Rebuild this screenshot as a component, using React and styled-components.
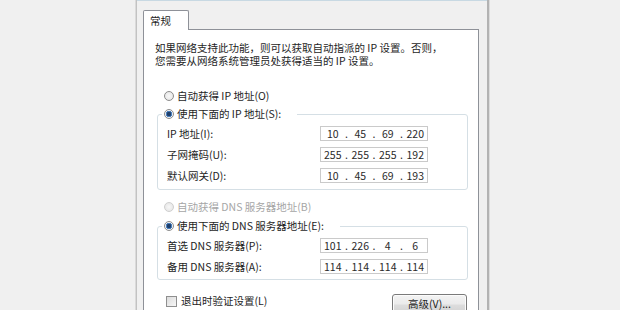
import React from 'react';
import styled, { createGlobalStyle } from 'styled-components';

const GlobalStyle = createGlobalStyle`
  html, body {
    margin: 0;
    padding: 0;
    background: #f0f0f0;
    overflow: hidden;
  }
  body {
    font-family: "Noto Sans CJK SC", "Liberation Sans", sans-serif;
    font-size: 10.5px;
    color: #1e1e1e;
  }
`;

const Screen = styled.div`
  display: flex;
  width: 620px;
  height: 310px;
  overflow: hidden;
`;

const Gutter = styled.div`
  width: 136px;
  flex-shrink: 0;
`;

const Window = styled.div`
  width: 353px;
  flex-shrink: 0;
  box-sizing: border-box;
  border-left: 1px solid #c2c2c2;
  border-right: 2px solid #b3b3b3;
  box-shadow: -1px 0 0 #dadada, 1px 0 0 #dcdcdc;
  display: flex;
  flex-direction: column;
  background: #f0f0f0;
`;

const TitleEdge = styled.div`
  height: 3px;
  background: linear-gradient(#e6f4fb, #d6eaf4);
  border-bottom: 1px solid #c8d9e3;
`;

const Body = styled.div`
  flex: 1;
  display: flex;
  flex-direction: column;
  padding: 9px 8px 0 6px;
`;

const Tabs = styled.div`
  display: flex;
  position: relative;
  z-index: 1;
  margin-bottom: -1px;
`;

const Tab = styled.div`
  width: 46px;
  height: 20px;
  box-sizing: border-box;
  border: 1px solid #8e9198;
  border-bottom: none;
  border-radius: 2px 2px 0 0;
  background: #fff;
  padding: 3px 0 0 6px;
  line-height: 14px;
`;

const Panel = styled.div`
  flex: 1;
  display: flex;
  flex-direction: column;
  background: #fff;
  border: 1px solid #8e9198;
  border-bottom: none;
  padding-top: 11px;
`;

const Desc = styled.p`
  margin: 0 0 0 11px;
  line-height: 13px;
  white-space: nowrap;
`;

const DescLine = styled.span`
  display: block;
  height: 13px;
`;

const Option = styled.label`
  display: inline-flex;
  align-items: center;
  gap: 3px;
  height: 14px;
  line-height: 14px;
  white-space: nowrap;
  color: ${p => (p.$disabled ? '#a6a6a6' : '#1e1e1e')};
  margin: ${p => p.$margin || '0'};
`;

const RadioDot = styled.span`
  width: 10px;
  height: 10px;
  box-sizing: border-box;
  border-radius: 50%;
  border: 1px solid ${p => (p.$disabled ? '#cfcfcf' : '#8c8c8c')};
  background: ${p =>
    p.$checked
      ? 'radial-gradient(circle, #1f3f6a 0 2px, #4a7fbd 2.4px 3px, #f4f4f4 3.3px)'
      : 'radial-gradient(circle, #f8f8f8, #e2e2e2)'};
`;

const Group = styled.fieldset`
  margin: ${p => p.$top} 10px 0 13px;
  padding: 4px 39px ${p => p.$bottom} 9px;
  border: 1px solid #d5dfe5;
  border-radius: 3px;
  min-width: 0;
`;

const Legend = styled.legend`
  padding: 0 16px 0 2px;
  margin-left: -5px;
  line-height: 14px;
`;

const Fields = styled.div`
  display: grid;
  grid-template-columns: 153px 108px;
  grid-auto-rows: 15px;
  row-gap: 6px;
  align-items: center;
`;

const FieldLabel = styled.span`
  line-height: 14px;
  white-space: nowrap;
`;

const IpBox = styled.div`
  display: flex;
  width: 108px;
  height: 15px;
  box-sizing: border-box;
  border: 1px solid #cacaca;
  background: #fff;
  color: #2a2a2a;
  line-height: 13px;
`;

const Octet = styled.span`
  flex: 1;
  text-align: center;
`;

const Dot = styled.span`
  width: 4px;
  text-align: center;
`;

const Footer = styled.div`
  display: flex;
  justify-content: space-between;
  align-items: flex-start;
  margin-top: 14px;
  padding: 0 11px 0 22px;
`;

const CheckBox = styled.span`
  width: 11px;
  height: 11px;
  box-sizing: border-box;
  border: 1px solid #8f8f8f;
  background: linear-gradient(135deg, #dcdcdc, #f7f7f7);
  margin-right: 1px;
`;

const Button = styled.div`
  width: 75px;
  height: 22px;
  box-sizing: border-box;
  border: 1px solid #7a7a7a;
  border-radius: 3px;
  background: linear-gradient(#f3f3f3 0%, #ebebeb 45%, #dddddd 50%, #cfcfcf 100%);
  box-shadow: inset 0 0 0 1px #fcfcfc;
  text-align: center;
  padding-top: 2px;
  line-height: 14px;
  color: #1e1e1e;
`;

function Radio({ checked, disabled, children, margin }) {
  return (
    <Option $disabled={disabled} $margin={margin}>
      <RadioDot $checked={checked} $disabled={disabled} />
      {children}
    </Option>
  );
}

function IpField({ value }) {
  const parts = value.split('.');
  return (
    <IpBox>
      {parts.map((p, i) => (
        <React.Fragment key={i}>
          {i > 0 && <Dot>.</Dot>}
          <Octet>{p}</Octet>
        </React.Fragment>
      ))}
    </IpBox>
  );
}

const ipRows = [
  ['IP 地址(I):', '10.45.69.220'],
  ['子网掩码(U):', '255.255.255.192'],
  ['默认网关(D):', '10.45.69.193'],
];

const dnsRows = [
  ['首选 DNS 服务器(P):', '101.226.4.6'],
  ['备用 DNS 服务器(A):', '114.114.114.114'],
];

function App() {
  return (
    <>
      <GlobalStyle />
      <Screen>
        <Gutter />
        <Window>
          <TitleEdge />
          <Body>
            <Tabs>
              <Tab>常规</Tab>
            </Tabs>
            <Panel>
              <Desc>
                <DescLine>如果网络支持此功能，则可以获取自动指派的 IP 设置。否则，</DescLine>
                <DescLine>您需要从网络系统管理员处获得适当的 IP 设置。</DescLine>
              </Desc>

              <div>
                <Radio margin="22px 0 0 20px">自动获得 IP 地址(O)</Radio>
              </div>
              <Group $top="3px" $bottom="6px">
                <Legend>
                  <Radio checked>使用下面的 IP 地址(S):</Radio>
                </Legend>
                <Fields>
                  {ipRows.map(([label, ip]) => (
                    <React.Fragment key={label}>
                      <FieldLabel>{label}</FieldLabel>
                      <IpField value={ip} />
                    </React.Fragment>
                  ))}
                </Fields>
              </Group>

              <div>
                <Radio disabled margin="10px 0 0 20px">自动获得 DNS 服务器地址(B)</Radio>
              </div>
              <Group $top="4px" $bottom="5px">
                <Legend>
                  <Radio checked>使用下面的 DNS 服务器地址(E):</Radio>
                </Legend>
                <Fields>
                  {dnsRows.map(([label, ip]) => (
                    <React.Fragment key={label}>
                      <FieldLabel>{label}</FieldLabel>
                      <IpField value={ip} />
                    </React.Fragment>
                  ))}
                </Fields>
              </Group>

              <Footer>
                <Option>
                  <CheckBox />
                  退出时验证设置(L)
                </Option>
                <Button>高级(V)...</Button>
              </Footer>
            </Panel>
          </Body>
        </Window>
      </Screen>
    </>
  );
}

export default App;
